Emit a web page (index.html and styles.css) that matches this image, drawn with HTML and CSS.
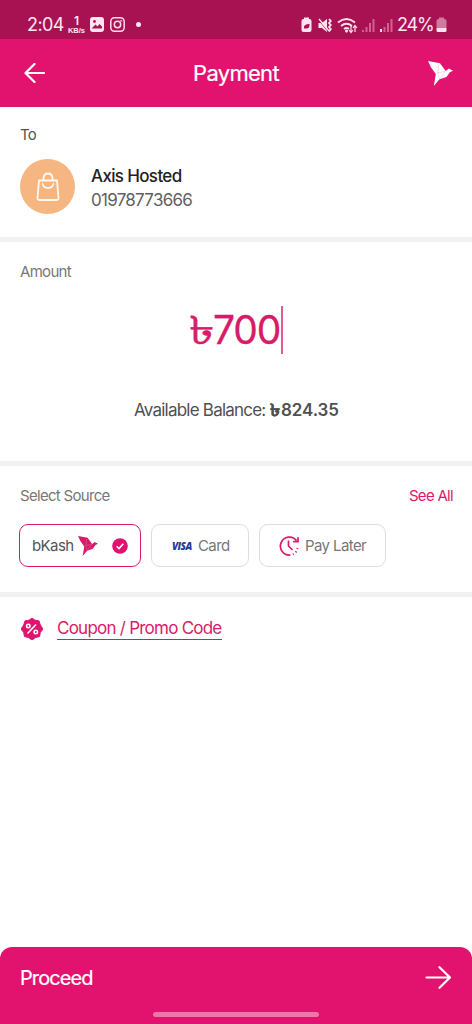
FILE: index.html
```html
<!DOCTYPE html>
<html lang="en">
<head>
<meta charset="utf-8">
<meta name="viewport" content="width=device-width, initial-scale=1">
<title>Payment</title>
<link rel="stylesheet" href="styles.css">
</head>
<body>
<svg class="defs" width="0" height="0" aria-hidden="true">
  <symbol id="bird" viewBox="0 0 24 24">
    <path fill="currentColor" d="M0 0L11.500 2.200L17 9.500L20 7.200L24 9.400L21 10.800L17.800 15.400L11 17.600L5.600 24L7.500 12.500L2.800 6Z"/>
    <path class="fold" fill="none" stroke-width=".45" d="M16.500 10L8.500 11.500M9.500 11.500L11 17.600L16.500 10M10.500 3L9.500 11.500"/>
  </symbol>
</svg>
<div class="screen">
  <div class="status">
    <div class="status-left">
      <span class="clock">2:04</span>
      <span class="speed"><b>1</b><i>KB/s</i></span>
      <svg class="photo" width="14" height="15" viewBox="0 0 14 15"><rect width="14" height="15" rx="3" fill="#ffe6f0"/><path d="M2 11 L5.5 7.5 L7.5 9.5 L9.5 7 L12 9.5 V11.5 H2Z" fill="#a81252"/><circle cx="4.5" cy="4.5" r="1.4" fill="#a81252"/></svg>
      <svg class="insta" width="15" height="15" viewBox="0 0 15 15" fill="none" stroke="#ffdce9" stroke-width="1.5"><rect x=".8" y=".8" width="13.4" height="13.4" rx="3.6"/><circle cx="7.5" cy="7.5" r="3.2"/><circle cx="11.3" cy="3.7" r=".3"/></svg>
      <span class="dot"></span>
    </div>
    <div class="status-right">
      <svg width="152" height="18" viewBox="0 0 152 18" fill="#ffe3ee">
        <path d="M2.500 2H3V.5h5V2h.5q2 0 2 2v9q0 2-2 2h-6q-2 0-2-2V4q0-2 2-2z"/><path d="M3 11.500q-1-4.500 5.500-4.500q.5 5-4 4.500z" fill="#a81252"/>
        <path d="M17.500 6h3.500l5-4v13l-5-4h-3.500z"/><path d="M17 2.500L27 14.500" stroke="#a81252" stroke-width=".8"/><path d="M18 2L28 14" stroke="#ffe3ee" stroke-width="1.300"/><path d="M28 2l1.800 2-1.800 2 1.800 2-1.800 2 1.800 2-1.800 2.500" fill="none" stroke="#ffe3ee" stroke-width="1.800"/>
        <g fill="none" stroke="#ffe3ee" stroke-width="1.700"><path d="M37 5.500q8.500-7 17 0M40 9q5.500-4.500 11 0M43 12q2.500-2 5 0"/></g><circle cx="45.500" cy="14" r="1.500"/>
        <path d="M50 9v6M48 13l2 2.500 2-2.500M54 15V9M52 11l2-2.500 2 2.500" fill="none" stroke="#ffe3ee" stroke-width="1.200"/>
        <g fill="#d45f91"><path d="M61 13h2v2h-2zM64.500 10h2v5h-2zM68 6h2v9h-2zM71.500 2h2v13h-2z"/><path d="M82.500 10h2v5h-2zM86 6h2v9h-2zM89.500 2h2v13h-2z"/></g><path d="M79 12h2v3h-2z"/>
        <path d="M135.500 4q0-2 2-2h.5V.5h5V2h.5q2 0 2 2v7h-10z" fill="#cf7ba0"/><path d="M135.500 11h10v2.500q0 1.500-1.500 1.500h-7q-1.500 0-1.500-1.500z"/>
      </svg>
      <span class="percent">24%</span>
    </div>
  </div>
  <header class="header">
    <svg class="back" width="22" height="20" viewBox="0 0 22 20"><path d="M10.500 1L1.500 10L10.500 19M2 10H20" fill="none" stroke="#fff" stroke-width="2.200" stroke-linecap="round" stroke-linejoin="round"/></svg>
    <h1>Payment</h1>
    <svg class="bird bird-top" width="25" height="25"><use href="#bird"/></svg>
  </header>
  <section class="to">
    <div class="label to-label">To</div>
    <div class="payee">
      <span class="avatar"><svg width="24" height="30" viewBox="0 0 24 30" fill="none" stroke="#fff8ec" stroke-width="1.800" stroke-linecap="round" stroke-linejoin="round"><path d="M3 8.500H21L22.500 26q.1 2-1.800 2H3.300Q1.400 28 1.500 26ZM7.500 8V6q.5-4.500 4.500-4.500T16.500 6v2M6.500 12q1.200 4 5.500 4t5.500-4"/></svg></span>
      <div><div class="name">Axis Hosted</div><div class="phone">01978773666</div></div>
    </div>
  </section>
  <section class="amount">
    <div class="label amount-label">Amount</div>
    <div class="value"><span class="taka">৳</span><span class="num">700</span><span class="caret"></span></div>
    <div class="balance"><span class="balance-label">Available Balance:</span><span class="taka-small">৳</span><span class="balance-num">824.35</span></div>
  </section>
  <section class="source">
    <div class="source-head"><span class="label source-label">Select Source</span><a class="see-all">See All</a></div>
    <div class="chips">
      <div class="chip active"><span class="t-bkash">bKash</span><svg class="bird bird-small" width="20" height="20"><use href="#bird"/></svg><svg class="check" width="16" height="16" viewBox="0 0 16 16"><circle cx="8" cy="8" r="7.800" fill="#e2136e"/><path d="M4.700 8.300L7 10.600L11.300 5.800" fill="none" stroke="#fff" stroke-width="1.600"/></svg></div>
      <div class="chip card"><span class="visa">VISA</span><span class="t-card">Card</span></div>
      <div class="chip later"><svg width="22" height="22" viewBox="0 0 22 22" fill="none" stroke="#d81b69" stroke-width="1.700"><path d="M12.500 20A9 9 0 1 1 18.500 5.500M20 2.200V6.700H15.200M10.500 5.500V11L14.500 15"/><path d="M14.800 19.400l.8-.4M17.600 17.200l.8-.8M19.200 14l.4-1" stroke-width="2"/></svg><span class="t-later">Pay Later</span></div>
    </div>
  </section>
  <section class="coupon">
    <svg width="22" height="22" viewBox="0 0 22 22"><path d="M11 0L14 2.200L18 2.800L19.300 7L22 11L19.300 14.500L18.600 18.500L14.500 19.600L11 22L7.500 19.600L3.400 18.500L2.700 14.500L0 11L2.700 7L4 2.800L8 2.200Z" fill="#e2136e" stroke="#e2136e" stroke-linejoin="round" stroke-width="1"/><g fill="none" stroke="#fff" stroke-width="1.600"><path d="M6.500 15.500L15 6.500"/><circle cx="7.300" cy="8" r="1.700"/><circle cx="14.800" cy="14" r="1.700"/></g></svg>
    <a>Coupon / Promo Code</a>
  </section>
  <footer class="proceed">
    <div class="proceed-row"><span>Proceed</span><svg width="27" height="23" viewBox="0 0 27 23"><path d="M1.500 11.500H25M14.500 1.200L25 11.500L14.500 21.800" fill="none" stroke="#fff" stroke-width="2.200" stroke-linecap="round" stroke-linejoin="round"/></svg></div>
    <div class="home"></div>
  </footer>
</div>
</body>
</html>
```
FILE: styles.css
```css
* { box-sizing: border-box; }
body { margin: 0; font-family: Inter, "Noto Sans", sans-serif; background: #fff; }
h1 { margin: 0; }
svg { display: block; flex: none; }
.defs { position: absolute; }
.screen { width: 472px; height: 1024px; display: flex; flex-direction: column; white-space: nowrap; background: #fff; }
.status { height: 39px; background: #a81252; color: #ffe6f0; display: flex; justify-content: space-between; padding: 15px 26px 0 27px; }
.status-left { display: flex; align-items: flex-start; height: 20px; }
.clock { font-size: 18px; line-height: 20px; width: 41px; letter-spacing: -.6px; }
.speed { width: 17px; margin-right: 5px; display: flex; flex-direction: column; align-items: center; }
.speed b { font-size: 12px; line-height: 12px; font-weight: 600; }
.speed i { font: bold 7.5px/7px "Liberation Sans", sans-serif; }
.photo { margin: 2px 6px 0 0; }
.insta { margin: 2px 0 0; }
.dot { width: 5px; height: 5px; border-radius: 50%; background: #ffe6f0; margin: 7px 0 0 11px; }
.status-right { display: grid; width: 145px; }
.status-right svg { grid-area: 1 / 1; margin-top: 2px; }
.percent { grid-area: 1 / 1; margin-left: 96px; font-size: 18px; line-height: 20px; letter-spacing: -1.1px; }
.header { height: 68px; background: #e2136e; display: flex; align-items: center; justify-content: space-between; padding: 0 19px 0 24px; color: #fff; }
h1 { font-size: 22px; font-weight: 400; letter-spacing: -.7px; margin-right: 2px; -webkit-text-stroke: .2px #fff; }
.bird-top { color: #fff; --fold: #f7a6c8; }
.bird { overflow: visible; }
.fold { stroke: var(--fold); }
section { border-bottom: 5px solid #f1f1f1; padding: 0 19px 0 20px; }
.label { font-size: 15px; line-height: 20px; color: #777; letter-spacing: -.7px; }
.to { height: 135px; padding-top: 18px; }
.to-label { color: #555; }
.payee { display: flex; margin-top: 14px; gap: 16px; align-items: flex-start; }
.avatar { width: 55px; height: 55px; border-radius: 50%; background: #f6b681; display: grid; place-items: center; }
.name { font-size: 17px; line-height: 24px; font-weight: 500; color: #222; margin-top: 5px; letter-spacing: -.65px; }
.phone { font-size: 17px; line-height: 24px; font-weight: 400; color: #606060; letter-spacing: -.73px; }
.amount { height: 224px; padding-top: 20px; }
.amount-label { letter-spacing: -.7px; }
.value { display: flex; height: 50px; margin-top: 23px; padding-left: 169px; color: #d81b69; font-size: 39px; line-height: 50px; }
.taka { width: 24px; transform: scaleX(1.32); transform-origin: left; -webkit-text-stroke: .5px currentColor; }
.num { width: 68px; letter-spacing: -1.2px; -webkit-text-stroke: .3px currentColor; }
.caret { width: 2px; height: 48px; margin-top: 1px; background: #dc5c94; }
.balance { display: flex; margin-top: 43px; padding-left: 114px; font-size: 17px; line-height: 24px; color: #505050; }
.balance-label { width: 136px; letter-spacing: -.78px; }
.taka-small { width: 11px; font-weight: 600; transform: scaleX(1.2); transform-origin: left; -webkit-text-stroke: .2px currentColor; }
.balance-num { font-weight: 600; letter-spacing: -.1px; }
.source { height: 131px; padding-top: 20px; }
.source-head { display: flex; justify-content: space-between; }
.see-all { color: #d81b69; font-size: 15px; line-height: 20px; letter-spacing: -.7px; }
.chips { display: flex; gap: 10px; margin: 18px 0 0 -1px; }
.chip { height: 43px; border: 1px solid #ddd; border-radius: 9px; display: flex; align-items: center; font-size: 15px; color: #777; letter-spacing: -.6px; }
.active { width: 122px; border-color: #d81b69; color: #555; padding-left: 12px; }
.t-bkash { width: 46px; }
.bird-small { color: #d81b69; --fold: #ee78aa; }
.check { margin-left: 14px; }
.card { width: 98px; padding-left: 20px; }
.visa { width: 26px; font: italic 800 10px/12px "Open Sans", sans-serif; color: #263b94; letter-spacing: -.6px; }
.later { width: 127px; padding-left: 18px; }
.later svg { margin-right: 5px; }
.coupon { border: 0; display: flex; align-items: center; padding: 21px 0 0 21px; gap: 14px; }
.coupon a { color: #d81b69; font-size: 17px; line-height: 21px; border-bottom: 1px solid #d81b69; letter-spacing: -.76px; }
.coupon svg { margin-top: -1px; }
.proceed { margin-top: auto; height: 77px; border-radius: 12px 12px 0 0; background: #e2136e; color: #fff; padding: 17px 20px 0; }
.proceed-row { display: flex; align-items: center; justify-content: space-between; height: 26px; font-size: 20px; font-weight: 400; letter-spacing: -.9px; -webkit-text-stroke: .2px #fff; }
.proceed-row span { margin-top: 1px; }
.home { width: 166px; height: 5px; border-radius: 3px; background: #f075a8; margin: 22px 0 0 133px; }
```
